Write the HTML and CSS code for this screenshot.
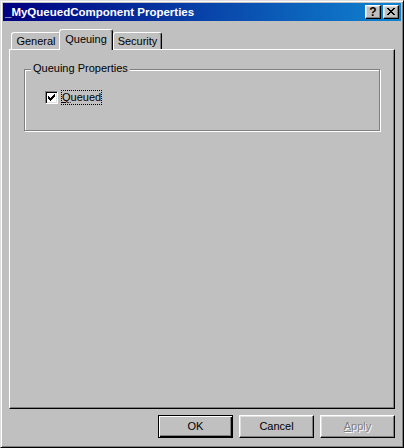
FILE: index.html
```html
<!DOCTYPE html>
<html>
<head>
<meta charset="utf-8">
<link rel="stylesheet" href="styles.css">
</head>
<body>
<div class="window">
  <div class="titlebar">
    <span class="title">_MyQueuedComponent Properties</span>
    <div class="caption-buttons">
      <div class="cap-btn help">?</div>
      <div class="cap-btn close">
        <svg width="8" height="7" viewBox="0 0 8 7" shape-rendering="crispEdges"><path fill="#000" d="M0 0h2v1H0z M6 0h2v1H6z M1 1h2v1H1z M5 1h2v1H5z M2 2h4v1H2z M3 3h2v1H3z M2 4h4v1H2z M1 5h2v1H1z M5 5h2v1H5z M0 6h2v1H0z M6 6h2v1H6z"/></svg>
      </div>
    </div>
  </div>
  <div class="body">
    <div class="tabs">
      <div class="tab first">General</div>
      <div class="tab selected">Queuing</div>
      <div class="tab last">Security</div>
    </div>
    <div class="panel">
      <div class="group">
        <div class="group-label">Queuing Properties</div>
        <div class="check-row">
          <span class="checkbox">
            <svg width="7" height="7" viewBox="0 0 7 7" shape-rendering="crispEdges"><path fill="#000" d="M6 0h1v1H6z M5 1h2v1H5z M0 2h1v1H0z M4 2h3v1H4z M0 3h2v1H0z M3 3h3v1H3z M0 4h5v1H0z M1 5h3v1H1z M2 6h1v1H2z"/></svg>
          </span>
          <span class="check-label"><u>Q</u>ueued</span>
        </div>
      </div>
    </div>
    <div class="buttons">
      <div class="btn default">OK</div>
      <div class="btn">Cancel</div>
      <div class="btn disabled"><u>A</u>pply</div>
    </div>
  </div>
</div>
</body>
</html>
```
FILE: styles.css
```css
* { box-sizing: border-box; }
body {
  margin: 0;
  background: #c0c0c0;
  font-family: "Liberation Sans", Arial, sans-serif;
  font-size: 11px;
  color: #000;
}
.window {
  width: 404px;
  height: 448px;
  background: #c0c0c0;
  border: 1px solid;
  border-color: #dfdfdf #000 #000 #dfdfdf;
  box-shadow: inset 1px 1px #fff, inset -1px -1px #808080;
  padding: 2px;
  display: flex;
  flex-direction: column;
}
.titlebar {
  height: 18px;
  background: linear-gradient(to right, #000080, #1084d0);
  display: flex;
  align-items: flex-start;
  justify-content: space-between;
  padding: 0 2px;
}
.title {
  color: #fff;
  font-weight: bold;
  font-size: 11.5px;
  line-height: 18px;
}
.caption-buttons {
  display: flex;
  gap: 2px;
  margin-top: 2px;
}
.cap-btn {
  width: 16px;
  height: 14px;
  background: #c0c0c0;
  border: 1px solid;
  border-color: #fff #000 #000 #fff;
  box-shadow: inset -1px -1px #808080, inset 1px 1px #dfdfdf;
  display: flex;
  align-items: center;
  justify-content: center;
}
.help {
  font-weight: bold;
  font-size: 12px;
  line-height: 12px;
}
.close svg { display: block; margin-top: -1px; }
.body {
  flex: 1;
  display: flex;
  flex-direction: column;
  padding: 8px 6px 0 6px;
}
.tabs {
  display: flex;
  align-items: flex-end;
  padding-left: 2px;
}
.tab {
  height: 17px;
  background: #c0c0c0;
  border: 1px solid;
  border-bottom: none;
  border-color: #fff #000 transparent #fff;
  box-shadow: inset -1px 0 #808080;
  border-radius: 3px 3px 0 0;
  text-align: center;
  line-height: 14px;
  padding-top: 1px;
}
.tab.first { width: 50px; }
.tab.selected {
  width: 54px;
  height: 21px;
  margin-left: -2px;
  margin-bottom: -1px;
  padding-top: 2px;
  position: relative;
  z-index: 1;
}
.tab.last { width: 49px; }
.panel {
  height: 360px;
  background: #c0c0c0;
  border: 1px solid;
  border-color: #fff #000 #000 #fff;
  box-shadow: inset -1px -1px #808080;
  padding: 19px 14px 0 14px;
}
.group {
  height: 62px;
  border: 1px solid #808080;
  box-shadow: 1px 1px 0 #fff, inset 1px 1px 0 #fff;
  padding-left: 6px;
}
.group-label {
  width: fit-content;
  margin-top: -8px;
  padding: 0 2px;
  line-height: 13px;
  background: #c0c0c0;
}
.check-row {
  display: flex;
  align-items: center;
  margin-top: 16px;
  padding-left: 14px;
}
.checkbox {
  width: 13px;
  height: 13px;
  background: #fff;
  border: 1px solid;
  border-color: #808080 #fff #fff #808080;
  box-shadow: inset 1px 1px #000, inset -1px -1px #dfdfdf;
  display: flex;
  align-items: center;
  justify-content: center;
}
.checkbox svg { display: block; }
.check-label {
  margin-left: 4px;
  line-height: 13px;
  outline: 1px dotted #000;
}
.buttons {
  display: flex;
  justify-content: flex-end;
  gap: 6px;
  margin-top: 6px;
}
.btn {
  width: 75px;
  height: 23px;
  background: #c0c0c0;
  border: 1px solid;
  border-color: #fff #000 #000 #fff;
  box-shadow: inset -1px -1px #808080, inset 1px 1px #dfdfdf;
  display: flex;
  align-items: center;
  justify-content: center;
  line-height: 13px;
  padding-bottom: 1px;
}
.btn.default {
  border-color: #000;
  box-shadow: inset 1px 1px #fff, inset -1px -1px #000, inset -2px -2px #808080;
}
.btn.disabled {
  color: #808080;
  text-shadow: 1px 1px 0 #fff;
}
```
